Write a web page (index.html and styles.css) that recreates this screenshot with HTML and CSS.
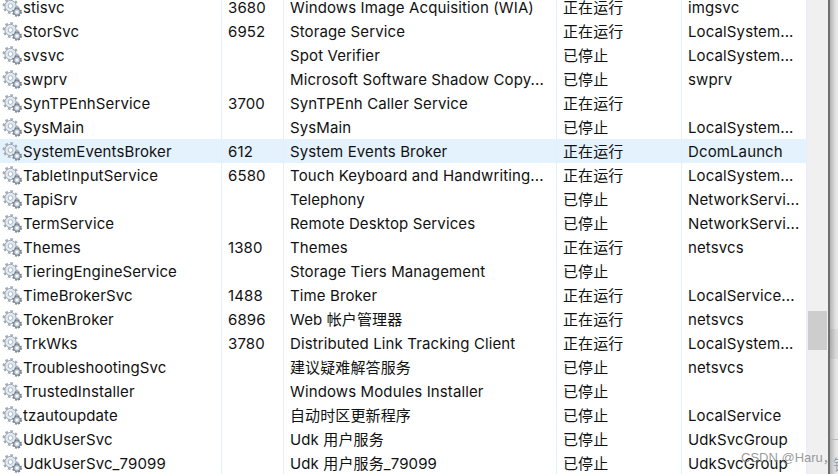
FILE: index.html
```html
<!DOCTYPE html>
<html lang="zh-CN">
<head>
    <meta charset="UTF-8">
    <title>服务</title>
    <link rel="stylesheet" href="styles.css">
</head>
<body>
    <svg class="defs" width="0" height="0">
        <symbol id="gear" viewBox="0 0 20 19">
            <circle cx="8.5" cy="8" r="6.7" fill="none" stroke="#a3aeba" stroke-width="2.4" stroke-dasharray="2.6 2.6"/>
            <circle cx="8.5" cy="8" r="5.6" fill="#e3eaf1" stroke="#9aa7b5" stroke-width="1"/>
            <circle cx="8.5" cy="8" r="2.4" fill="#fff" stroke="#a9b5c1" stroke-width="1"/>
            <circle cx="15" cy="14" r="4" fill="none" stroke="#6f7c8a" stroke-width="1.8" stroke-dasharray="1.6 1.6"/>
            <circle cx="15" cy="14" r="3.3" fill="#cfd9e3" stroke="#6f7c8a" stroke-width="1"/>
            <circle cx="15" cy="14" r="1.1" fill="#fff"/>
        </symbol>
    </svg>
    <div class="window">
        <div class="list">
            <div class="row"><div class="c name"><svg class="ico"><use href="#gear"/></svg>stisvc</div><div class="c pid">3680</div><div class="c desc">Windows Image Acquisition (WIA)</div><div class="c stat">正在运行</div><div class="c grp">imgsvc</div></div>
            <div class="row"><div class="c name"><svg class="ico"><use href="#gear"/></svg>StorSvc</div><div class="c pid">6952</div><div class="c desc">Storage Service</div><div class="c stat">正在运行</div><div class="c grp">LocalSystem...</div></div>
            <div class="row"><div class="c name"><svg class="ico"><use href="#gear"/></svg>svsvc</div><div class="c pid"></div><div class="c desc">Spot Verifier</div><div class="c stat">已停止</div><div class="c grp">LocalSystem...</div></div>
            <div class="row"><div class="c name"><svg class="ico"><use href="#gear"/></svg>swprv</div><div class="c pid"></div><div class="c desc">Microsoft Software Shadow Copy...</div><div class="c stat">已停止</div><div class="c grp">swprv</div></div>
            <div class="row"><div class="c name"><svg class="ico"><use href="#gear"/></svg>SynTPEnhService</div><div class="c pid">3700</div><div class="c desc">SynTPEnh Caller Service</div><div class="c stat">正在运行</div><div class="c grp"></div></div>
            <div class="row"><div class="c name"><svg class="ico"><use href="#gear"/></svg>SysMain</div><div class="c pid"></div><div class="c desc">SysMain</div><div class="c stat">已停止</div><div class="c grp">LocalSystem...</div></div>
            <div class="row selected"><div class="c name"><svg class="ico"><use href="#gear"/></svg>SystemEventsBroker</div><div class="c pid">612</div><div class="c desc">System Events Broker</div><div class="c stat">正在运行</div><div class="c grp">DcomLaunch</div></div>
            <div class="row"><div class="c name"><svg class="ico"><use href="#gear"/></svg>TabletInputService</div><div class="c pid">6580</div><div class="c desc">Touch Keyboard and Handwriting...</div><div class="c stat">正在运行</div><div class="c grp">LocalSystem...</div></div>
            <div class="row"><div class="c name"><svg class="ico"><use href="#gear"/></svg>TapiSrv</div><div class="c pid"></div><div class="c desc">Telephony</div><div class="c stat">已停止</div><div class="c grp">NetworkServi...</div></div>
            <div class="row"><div class="c name"><svg class="ico"><use href="#gear"/></svg>TermService</div><div class="c pid"></div><div class="c desc">Remote Desktop Services</div><div class="c stat">已停止</div><div class="c grp">NetworkServi...</div></div>
            <div class="row"><div class="c name"><svg class="ico"><use href="#gear"/></svg>Themes</div><div class="c pid">1380</div><div class="c desc">Themes</div><div class="c stat">正在运行</div><div class="c grp">netsvcs</div></div>
            <div class="row"><div class="c name"><svg class="ico"><use href="#gear"/></svg>TieringEngineService</div><div class="c pid"></div><div class="c desc">Storage Tiers Management</div><div class="c stat">已停止</div><div class="c grp"></div></div>
            <div class="row"><div class="c name"><svg class="ico"><use href="#gear"/></svg>TimeBrokerSvc</div><div class="c pid">1488</div><div class="c desc">Time Broker</div><div class="c stat">正在运行</div><div class="c grp">LocalService...</div></div>
            <div class="row"><div class="c name"><svg class="ico"><use href="#gear"/></svg>TokenBroker</div><div class="c pid">6896</div><div class="c desc">Web 帐户管理器</div><div class="c stat">正在运行</div><div class="c grp">netsvcs</div></div>
            <div class="row"><div class="c name"><svg class="ico"><use href="#gear"/></svg>TrkWks</div><div class="c pid">3780</div><div class="c desc">Distributed Link Tracking Client</div><div class="c stat">正在运行</div><div class="c grp">LocalSystem...</div></div>
            <div class="row"><div class="c name"><svg class="ico"><use href="#gear"/></svg>TroubleshootingSvc</div><div class="c pid"></div><div class="c desc">建议疑难解答服务</div><div class="c stat">已停止</div><div class="c grp">netsvcs</div></div>
            <div class="row"><div class="c name"><svg class="ico"><use href="#gear"/></svg>TrustedInstaller</div><div class="c pid"></div><div class="c desc">Windows Modules Installer</div><div class="c stat">已停止</div><div class="c grp"></div></div>
            <div class="row"><div class="c name"><svg class="ico"><use href="#gear"/></svg>tzautoupdate</div><div class="c pid"></div><div class="c desc">自动时区更新程序</div><div class="c stat">已停止</div><div class="c grp">LocalService</div></div>
            <div class="row"><div class="c name"><svg class="ico"><use href="#gear"/></svg>UdkUserSvc</div><div class="c pid"></div><div class="c desc">Udk 用户服务</div><div class="c stat">已停止</div><div class="c grp">UdkSvcGroup</div></div>
            <div class="row"><div class="c name"><svg class="ico"><use href="#gear"/></svg>UdkUserSvc_79099</div><div class="c pid"></div><div class="c desc">Udk 用户服务_79099</div><div class="c stat">已停止</div><div class="c grp">UdkSvcGroup</div></div>
        </div>
        <div class="scrollbar"><div class="thumb"></div></div>
        <div class="behind">
            <div class="band"></div>
            <div class="rule"></div>
            <div class="behind-glyph">钱</div>
        </div>
    </div>
    <div class="watermark">CSDN @Haru，</div>
</body>
</html>
```

FILE: styles.css
```css
html, body {
    margin: 0;
    padding: 0;
    height: 474px;
    overflow: hidden;
    background-color: #fff;
}

body {
    font-family: Inter, "Noto Sans CJK SC", sans-serif;
    font-size: 15px;
    letter-spacing: 0.12px;
    color: #111;
    position: relative;
}

.defs {
    display: block;
    height: 0;
}

.window {
    display: flex;
    height: 474px;
}

.list {
    width: 807px;
    margin-top: -5px;
    flex: none;
}

.row {
    display: flex;
    height: 24px;
    line-height: 24px;
}

.selected {
    background-color: #e4f2fd;
}

.c {
    box-sizing: border-box;
    white-space: nowrap;
    overflow: hidden;
    border-right: 1px solid #e6eefa;
    padding-top: 1px;
    padding-left: 6px;
}

.name {
    width: 222px;
    padding-left: 2px;
    display: flex;
    align-items: center;
}

.pid {
    width: 62px;
}

.desc {
    width: 273px;
}

.stat {
    width: 125px;
}

.grp {
    width: 125px;
}

.ico {
    width: 20px;
    height: 19px;
    margin-right: 1px;
    flex: none;
}

.scrollbar {
    width: 21px;
    background-color: #f0f0f0;
    padding-top: 311px;
    box-sizing: border-box;
    flex: none;
}

.thumb {
    width: 19px;
    height: 39px;
    background-color: #cdcdcd;
    margin-left: 1px;
}

.behind {
    flex: 1;
    border-left: 2px solid #6f6f6f;
    background: linear-gradient(to right, #b5b5b5, #e6e6e6 6px);
    padding-top: 329px;
    box-sizing: border-box;
    overflow: hidden;
}

.band {
    height: 30px;
    background-color: rgba(0, 0, 0, 0.05);
}

.rule {
    height: 1px;
    margin-top: 80px;
    background-color: #b8b8b8;
}

.behind-glyph {
    margin-top: 16px;
    margin-left: 3px;
    width: 15px;
    line-height: 18px;
    color: #8fa3b5;
}

.watermark {
    position: absolute;
    left: 741px;
    top: 451px;
    font-family: "Liberation Sans", "Noto Sans CJK SC", sans-serif;
    font-size: 13px;
    letter-spacing: 0;
    line-height: 14px;
    color: rgba(120, 120, 120, 0.75);
    white-space: nowrap;
}
```
